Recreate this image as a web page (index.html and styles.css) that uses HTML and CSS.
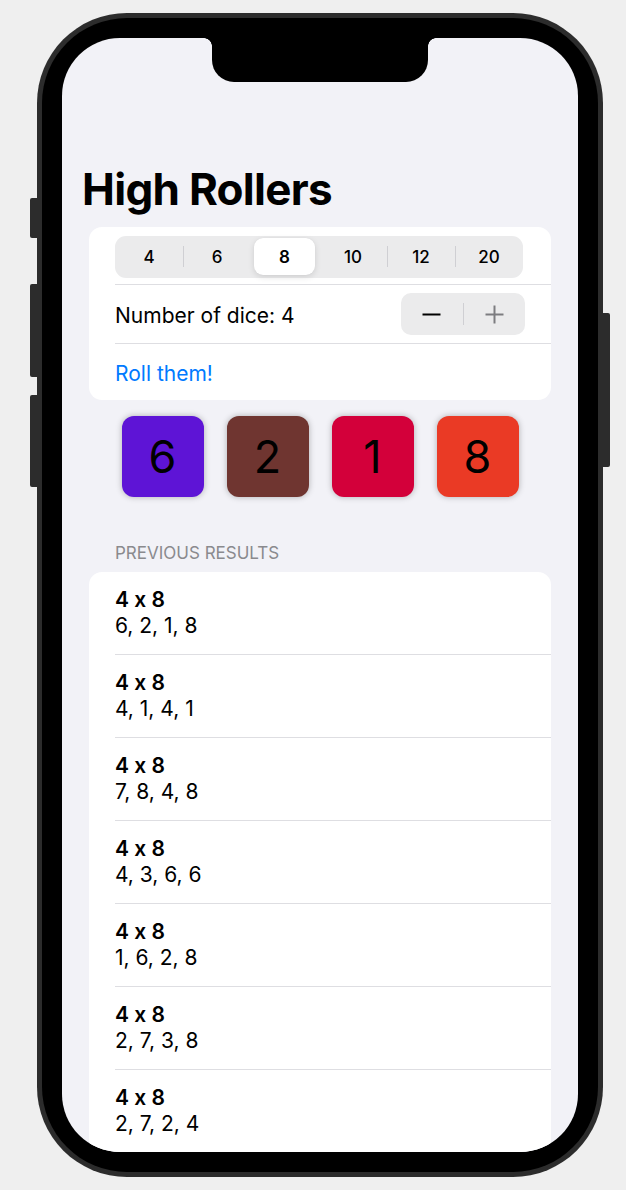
FILE: index.html
```html
<!DOCTYPE html>
<html lang="en">
<head>
<meta charset="utf-8">
<title>High Rollers</title>
<link rel="stylesheet" href="styles.css">
</head>
<body>
<div class="device">
  <span class="side-btn btn-mute"></span>
  <span class="side-btn btn-vol-up"></span>
  <span class="side-btn btn-vol-down"></span>
  <span class="side-btn btn-power"></span>
  <div class="bezel">
    <div class="screen">
      <div class="notch"></div>
      <div class="content">
        <h1 class="title">High Rollers</h1>

        <section class="card">
          <div class="row">
            <div class="row-inner seg-row">
              <div class="segmented">
                <span class="seg">4</span>
                <span class="seg sep">6</span>
                <span class="seg selected">8</span>
                <span class="seg">10</span>
                <span class="seg sep">12</span>
                <span class="seg sep">20</span>
              </div>
            </div>
          </div>
          <div class="row">
            <div class="row-inner stepper-row">
              <span class="label">Number of dice: 4</span>
              <div class="stepper">
                <span class="step-btn">
                  <svg width="19" height="19" viewBox="0 0 19 19"><line x1="0.5" y1="9.5" x2="18.5" y2="9.5" stroke="#000" stroke-width="2"/></svg>
                </span>
                <span class="step-div"></span>
                <span class="step-btn">
                  <svg width="19" height="19" viewBox="0 0 19 19"><line x1="0.5" y1="9.5" x2="18.5" y2="9.5" stroke="#7c7c80" stroke-width="2"/><line x1="9.5" y1="0.5" x2="9.5" y2="18.5" stroke="#7c7c80" stroke-width="2"/></svg>
                </span>
              </div>
            </div>
          </div>
          <div class="row">
            <div class="row-inner roll-row">
              <span class="link">Roll them!</span>
            </div>
          </div>
        </section>

        <div class="dice">
          <div class="die die-purple">6</div>
          <div class="die die-brown">2</div>
          <div class="die die-crimson">1</div>
          <div class="die die-red">8</div>
        </div>

        <h2 class="section-header">PREVIOUS RESULTS</h2>
        <section class="card results">
          <div class="row"><div class="row-inner result"><span class="r-title">4 x 8</span><span class="r-values">6, 2, 1, 8</span></div></div>
          <div class="row"><div class="row-inner result"><span class="r-title">4 x 8</span><span class="r-values">4, 1, 4, 1</span></div></div>
          <div class="row"><div class="row-inner result"><span class="r-title">4 x 8</span><span class="r-values">7, 8, 4, 8</span></div></div>
          <div class="row"><div class="row-inner result"><span class="r-title">4 x 8</span><span class="r-values">4, 3, 6, 6</span></div></div>
          <div class="row"><div class="row-inner result"><span class="r-title">4 x 8</span><span class="r-values">1, 6, 2, 8</span></div></div>
          <div class="row"><div class="row-inner result"><span class="r-title">4 x 8</span><span class="r-values">2, 7, 3, 8</span></div></div>
          <div class="row"><div class="row-inner result result-last"><span class="r-title">4 x 8</span><span class="r-values">2, 7, 2, 4</span></div></div>
        </section>
      </div>
    </div>
  </div>
</div>
</body>
</html>
```

FILE: styles.css
```css
* { box-sizing: border-box; margin: 0; padding: 0; }

html, body { width: 626px; height: 1190px; }

body {
  background: #efefef;
  font-family: Inter, "Noto Sans", sans-serif;
  font-feature-settings: "calt" 0;
  color: #000;
  overflow: hidden;
}

/* device frame */
.device {
  position: relative;
  width: 566px;
  height: 1164px;
  margin: 13px 0 0 37px;
  border-radius: 90px;
  background: #2c2c2c;
  padding: 5px;
}

.bezel {
  width: 100%;
  height: 100%;
  border-radius: 85px;
  background: #000;
  padding: 20px;
}

.side-btn {
  position: absolute;
  width: 7px;
  background: #2c2c2c;
}
.btn-mute { left: -7px; top: 185px; height: 40px; border-radius: 2px 0 0 2px; }
.btn-vol-up { left: -7px; top: 271px; height: 93px; border-radius: 2px 0 0 2px; }
.btn-vol-down { left: -7px; top: 382px; height: 92px; border-radius: 2px 0 0 2px; }
.btn-power { right: -7px; top: 300px; height: 154px; border-radius: 0 2px 2px 0; }

.screen {
  position: relative;
  width: 100%;
  height: 100%;
  border-radius: 58px;
  background: #f2f2f7;
  overflow: hidden;
}

.notch {
  position: absolute;
  top: 0;
  left: 50%;
  width: 216px;
  height: 44px;
  margin-left: -108px;
  background: #000;
  border-radius: 0 0 22px 22px;
  z-index: 2;
}
.notch::before,
.notch::after {
  content: "";
  position: absolute;
  top: 0;
  width: 8px;
  height: 8px;
}
.notch::before {
  left: -8px;
  background: radial-gradient(circle at 0 100%, transparent 7.5px, #000 8px);
}
.notch::after {
  right: -8px;
  background: radial-gradient(circle at 100% 100%, transparent 7.5px, #000 8px);
}

/* content */
.content {
  padding-top: 129px;
}

.title {
  font-size: 44px;
  line-height: 45px;
  font-weight: 700;
  letter-spacing: -0.7px;
  padding-left: 20px;
  margin-bottom: 15px;
}

.card {
  margin: 0 27px;
  background: #fff;
  border-radius: 13px;
  overflow: hidden;
}

.row { padding-left: 26px; }

.row-inner {
  display: flex;
  align-items: center;
  padding-right: 26px;
  border-bottom: 1px solid #dedee2;
}
.row:last-child .row-inner { border-bottom: none; }

.seg-row { padding-top: 9px; padding-bottom: 6px; padding-right: 28px; }

.segmented {
  display: grid;
  grid-template-columns: repeat(6, 1fr);
  width: 100%;
  height: 42px;
  padding: 2px 0 3px;
  background: #ebebec;
  border-radius: 11px;
}

.seg {
  position: relative;
  display: flex;
  align-items: center;
  justify-content: center;
  font-size: 17px;
  font-weight: 500;
}
.seg.sep::before {
  content: "";
  position: absolute;
  left: 0;
  top: 8px;
  bottom: 8px;
  width: 1px;
  background: #cfcfd3;
}
.seg.selected {
  margin: 0 4px 0 3px;
  background: #fff;
  border-radius: 9px;
  font-weight: 600;
  box-shadow: 0 2px 6px rgba(0, 0, 0, 0.12), 0 0 1px rgba(0, 0, 0, 0.08);
}

.stepper-row {
  justify-content: space-between;
  padding-top: 8px;
  padding-bottom: 8px;
}

.label, .link {
  font-size: 21px;
  line-height: 26px;
  padding-top: 3px;
}

.stepper {
  display: flex;
  align-items: center;
  width: 124px;
  height: 42px;
  background: #ebebec;
  border-radius: 10px;
}
.step-btn {
  flex: 1;
  display: flex;
  align-items: center;
  justify-content: center;
}
.step-btn svg { display: block; }
.step-div {
  width: 1px;
  height: 22px;
  background: #cfcfd3;
}

.roll-row { height: 56px; }
.link { color: #007aff; }

.dice {
  display: flex;
  justify-content: center;
  gap: 23px;
  margin-top: 16px;
}

.die {
  width: 82px;
  height: 81px;
  border-radius: 12px;
  display: flex;
  align-items: center;
  justify-content: center;
  font-size: 45px;
  font-weight: 400;
  box-shadow: 0 0 6px rgba(0, 0, 0, 0.28);
}
.die-purple { background: #5e14d6; }
.die-brown { background: #6f3530; }
.die-crimson { background: #d3003a; }
.die-red { background: #ea3a25; }

.section-header {
  margin: 46px 0 9px 53px;
  font-size: 17px;
  line-height: 20px;
  font-weight: 400;
  color: #8a8a8e;
}

.result {
  flex-direction: column;
  align-items: flex-start;
  padding-top: 15px;
  padding-bottom: 15px;
}
.row:last-child .result-last {
  border-bottom: 1px solid #dedee2;
}
.r-title {
  font-size: 21px;
  line-height: 26px;
  font-weight: 600;
}
.r-values {
  font-size: 21px;
  line-height: 26px;
}
```
